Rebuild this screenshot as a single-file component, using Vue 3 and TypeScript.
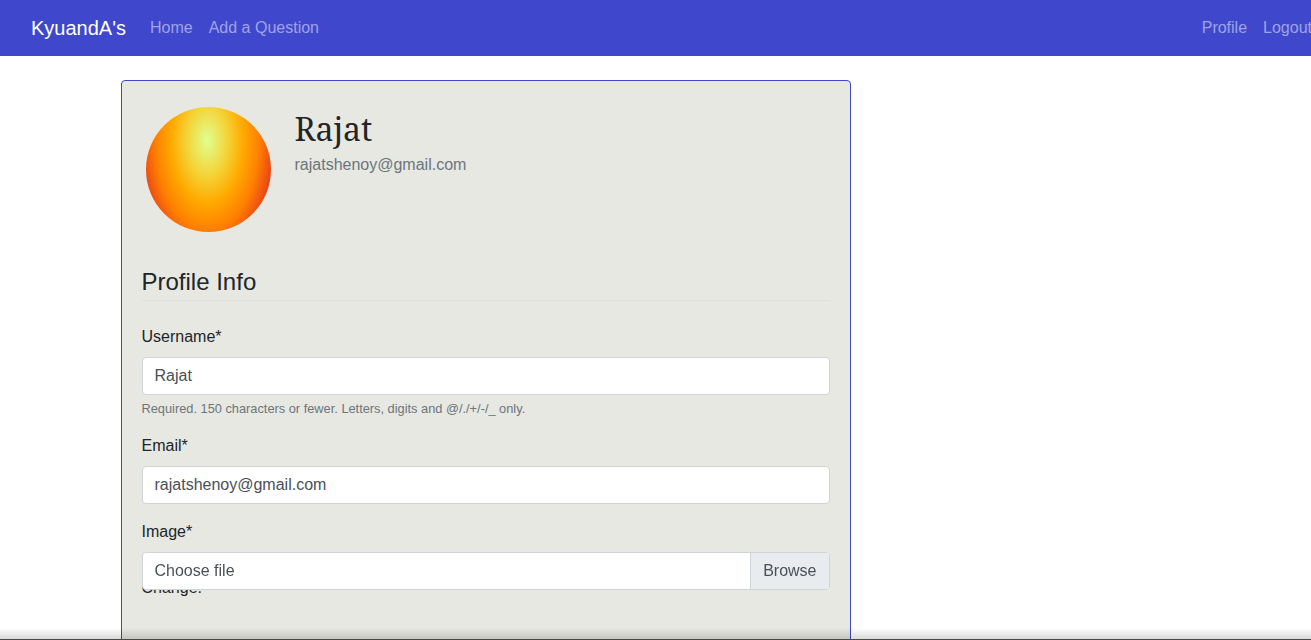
<script setup lang="ts">
import { ref } from 'vue'

const username = ref('Rajat')
const email = ref('rajatshenoy@gmail.com')
const mainLinks: string[] = ['Home', 'Add a Question']
const accountLinks: string[] = ['Profile', 'Logout']
</script>

<template>
  <div class="viewport">
    <div class="page">
      <nav class="navbar">
        <a class="brand" href="#">KyuandA's</a>
        <div class="links">
          <a v-for="link in mainLinks" :key="link" href="#">{{ link }}</a>
        </div>
        <div class="links account">
          <a v-for="link in accountLinks" :key="link" href="#">{{ link }}</a>
        </div>
      </nav>
      <main class="container">
        <section class="card">
          <header class="profile">
            <div class="avatar" role="img" aria-label="Profile picture"></div>
            <div>
              <h1>{{ username }}</h1>
              <p class="mail">{{ email }}</p>
            </div>
          </header>
          <form @submit.prevent>
            <h2>Profile Info</h2>
            <div class="group">
              <label for="username">Username*</label>
              <input id="username" class="control" type="text" :value="username" aria-describedby="hint" />
              <small id="hint">Required. 150 characters or fewer. Letters, digits and @/./+/-/_ only.</small>
            </div>
            <div class="group">
              <label for="email">Email*</label>
              <input id="email" class="control" type="email" :value="email" />
            </div>
            <div class="group">
              <label for="image">Image*</label>
              <div class="upload">
                <span class="change">Change:</span>
                <input id="image" class="file" type="file" />
                <label class="picker" for="image">
                  <span class="choose">Choose file</span>
                  <span class="browse">Browse</span>
                </label>
              </div>
            </div>
          </form>
        </section>
      </main>
    </div>
    <div class="edge"></div>
  </div>
</template>

<style>
body {
  margin: 0;
  background: #fff;
}
</style>

<style scoped>
* {
  box-sizing: border-box;
}
.viewport {
  height: 100vh;
  overflow-x: hidden;
  overflow-y: auto;
  scrollbar-width: none;
  color: #212529;
  font: 16px/24px "Liberation Sans", Arial, sans-serif;
}
.page {
  width: calc(100% + 40px);
}
.navbar {
  display: flex;
  align-items: center;
  min-height: 56px;
  padding: 8px 31px;
  background: #3f47cc;
}
.navbar a {
  text-decoration: none;
}
.brand {
  margin-right: 16px;
  color: #fff;
  font-size: 20px;
  line-height: 30px;
}
.links {
  display: flex;
}
.links a {
  padding: 8px;
  color: rgba(255, 255, 255, 0.5);
}
.account {
  margin-left: auto;
}
.container {
  max-width: 1140px;
  margin: 24px auto;
  padding: 0 15px;
}
.card {
  max-width: 730px;
  min-height: 620px;
  padding: 20px;
  border: 1px solid #3f47cc;
  border-radius: 4px;
  background: #e7e8e1;
}
.profile {
  display: flex;
  gap: 24px;
  padding: 6px 4px 0;
}
.avatar {
  width: 125px;
  height: 125px;
  flex: none;
  border-radius: 50%;
  background: radial-gradient(ellipse 72px 124px at 49% 27%, #e0ff90 0%, #f4d438 28%, #ffaa00 50%, #ff8000 72%, #e84018 94%);
}
h1 {
  margin: 3px 0 5px;
  font: 400 32px/38px "Noto Serif", "DejaVu Serif Condensed", "DejaVu Serif", serif;
}
.mail {
  margin: 0;
  color: #6c757d;
}
h2 {
  margin: 36px 0 24px;
  padding-bottom: 4px;
  border-bottom: 1px solid #dee2e6;
  font-size: 24px;
  font-weight: 400;
  line-height: 28px;
}
.group {
  margin-bottom: 16px;
}
.group > label {
  display: block;
  margin-bottom: 8px;
}
.control {
  display: block;
  width: 100%;
  height: 38px;
  padding: 6px 12px;
  border: 1px solid #ced4da;
  border-radius: 4px;
  background: #fff;
  color: #495057;
  font: inherit;
}
small {
  display: block;
  margin-top: 4px;
  color: #6c757d;
  font-size: 80%;
  line-height: 19px;
}
.upload {
  position: relative;
  padding-top: 24px;
}
.file {
  position: absolute;
  top: 0;
  left: 0;
  width: 100%;
  height: 38px;
  opacity: 0;
}
.picker {
  position: absolute;
  top: 0;
  left: 0;
  display: flex;
  width: 100%;
  height: 38px;
  overflow: hidden;
  border: 1px solid #ced4da;
  border-radius: 4px;
  background: #fff;
  color: #495057;
}
.choose {
  flex: 1;
  padding: 6px 12px;
}
.browse {
  padding: 6px 12px;
  border-left: 1px solid #ced4da;
  background: #e9ecef;
}
.edge {
  position: fixed;
  right: 0;
  bottom: 0;
  left: 0;
  height: 12px;
  border-bottom: 1px solid #484848;
  background: linear-gradient(to bottom, transparent, rgba(0, 0, 0, 0.15));
  pointer-events: none;
}
</style>
